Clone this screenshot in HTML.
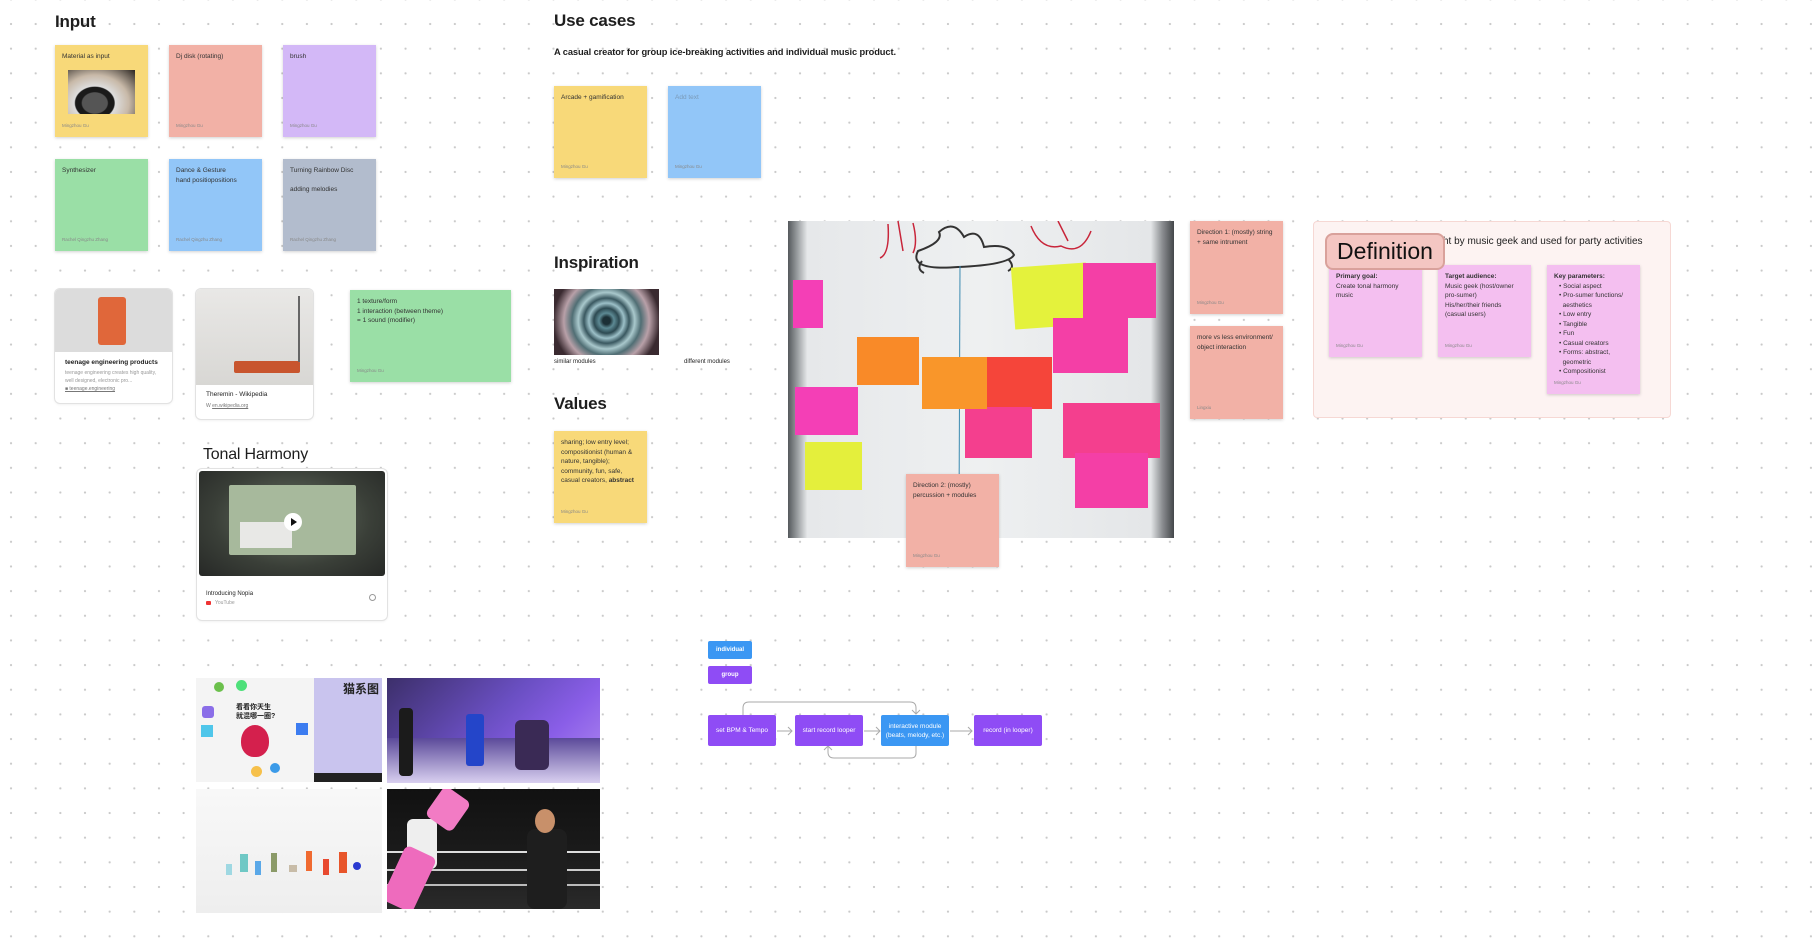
<!DOCTYPE html>
<html><head><meta charset="utf-8"><style>
*{margin:0;padding:0;box-sizing:border-box}
html,body{width:1812px;height:948px;overflow:hidden}
body{position:relative;background-color:#fff;background-image:radial-gradient(circle,#c9c9c9 0.9px,transparent 1.3px);background-size:24.66px 24.66px;background-position:-1.3px 11.7px;font-family:"Liberation Sans","Noto Sans CJK SC",sans-serif;color:#1e1e1e}
.a{position:absolute}
h1{position:absolute;font-size:17px;font-weight:bold;line-height:20px;letter-spacing:-0.2px}
.s{position:absolute;width:93px;height:92px;box-shadow:0 1px 3px rgba(0,0,0,.18);font-size:6.5px;line-height:9.5px;padding:7px 7px;color:#333}
.s .au{position:absolute;left:7px;bottom:7px;font-size:4.5px;color:#888}
.y{background:#f8d979}.r{background:#f2b1a6}.p{background:#d3b8f7}.g{background:#9adfa6}.b{background:#92c6f8}.gr{background:#b2bccd}.pk{background:#f4bff0}
.card{position:absolute;background:#fff;border-radius:5px;box-shadow:0 0 0 1px #e2e2e2,0 1px 3px rgba(0,0,0,.1);overflow:hidden}
.fl{position:absolute;height:31px;width:68px;color:#fff;font-size:6.5px;display:flex;align-items:center;justify-content:center;text-align:center;border-radius:2px;line-height:9px}
.pu{background:#8f4cf5}.bl{background:#3b97f3}
.wn{position:absolute}
</style></head><body>

<h1 style="left:55px;top:12px">Input</h1>
<div class="s y" style="left:55px;top:45px">Material as input
<div class="a" style="left:13px;top:25px;width:67px;height:44px;background:radial-gradient(ellipse at 40% 75%,#555 0 22%,#1a1a1a 24% 34%,#ddd 36%,#c8b9a8 60%,#2a2520 100%)"></div>
<div class="au">Mingzhou Gu</div></div>
<div class="s r" style="left:169px;top:45px">Dj disk (rotating)<div class="au">Mingzhou Gu</div></div>
<div class="s p" style="left:283px;top:45px">brush<div class="au">Mingzhou Gu</div></div>
<div class="s g" style="left:55px;top:159px">Synthesizer<div class="au">Rachel Qingzhu Zhang</div></div>
<div class="s b" style="left:169px;top:159px">Dance &amp; Gesture<br>hand positiopositions<div class="au">Rachel Qingzhu Zhang</div></div>
<div class="s gr" style="left:283px;top:159px">Turning Rainbow Disc<br><br>adding melodies<div class="au">Rachel Qingzhu Zhang</div></div>

<div class="card" style="left:55px;top:289px;width:117px;height:114px">
<div class="a" style="left:0;top:0;width:117px;height:63px;background:#dcdcdc"></div>
<div class="a" style="left:43px;top:8px;width:28px;height:48px;background:#e0673a;border-radius:3px"></div>
<div class="a" style="left:10px;top:70px;font-size:6.5px;font-weight:bold">teenage engineering products</div>
<div class="a" style="left:10px;top:80px;font-size:5px;line-height:8px;color:#999">teenage engineering creates high quality,<br>well designed, electronic pro...</div>
<div class="a" style="left:10px;top:97px;font-size:5px;color:#777;text-decoration:underline">&#9632; teenage.engineering</div>
</div>
<div class="card" style="left:196px;top:289px;width:117px;height:130px">
<div class="a" style="left:0;top:0;width:117px;height:96px;background:linear-gradient(#e9e8e6,#d8d7d4)"></div>
<div class="a" style="left:38px;top:72px;width:66px;height:12px;background:#c8552e;border-radius:2px"></div>
<div class="a" style="left:102px;top:7px;width:1.5px;height:66px;background:#666"></div>
<div class="a" style="left:10px;top:102px;font-size:6.5px">Theremin - Wikipedia</div>
<div class="a" style="left:10px;top:114px;font-size:5px;color:#777">W <u>en.wikipedia.org</u></div>
</div>
<div class="s g" style="left:350px;top:290px;width:161px;height:92px">1 texture/form<br>1 interaction (between theme)<br>= 1 sound (modifier)<div class="au">Mingzhou Gu</div></div>

<div class="a" style="left:203px;top:446px;font-size:16px;letter-spacing:-0.2px">Tonal Harmony</div>
<div class="card" style="left:197px;top:469px;width:190px;height:151px">
<div class="a" style="left:2px;top:2px;width:186px;height:105px;background:radial-gradient(ellipse at 50% 45%,#6b7566,#3a3f38 60%,#262826);border-radius:3px"></div>
<div class="a" style="left:32px;top:16px;width:127px;height:70px;background:#a7b99c;border-radius:2px"></div>
<div class="a" style="left:43px;top:53px;width:52px;height:26px;background:#e8e8e6"></div>
<div class="a" style="left:87px;top:44px;width:18px;height:18px;background:#fff;border-radius:50%"></div>
<div class="a" style="left:94px;top:49px;width:0;height:0;border-left:6px solid #111;border-top:4px solid transparent;border-bottom:4px solid transparent"></div>
<div class="a" style="left:9px;top:122px;font-size:6px">Introducing Nopia</div>
<div class="a" style="left:9px;top:132px;width:5px;height:4px;background:#e33;border-radius:1px"></div>
<div class="a" style="left:18px;top:131px;font-size:5px;color:#999">YouTube</div>
<div class="a" style="left:172px;top:125px;width:7px;height:7px;border:1px solid #999;border-radius:50%"></div>
</div>

<div class="a" style="left:196px;top:678px;width:186px;height:104px;background:#f4f4f4;overflow:hidden">
<div class="a" style="left:118px;top:0;width:68px;height:104px;background:#c9c4ee"></div>
<div class="a" style="left:147px;top:2px;font-size:12px;font-weight:bold;color:#222">猫系图</div>
<div class="a" style="left:40px;top:25px;font-size:7px;font-weight:bold;color:#222;line-height:9px">看看你天生<br>就混哪一圈?</div>
<div class="a" style="left:45px;top:47px;width:28px;height:32px;background:#d4204d;border-radius:50% 50% 45% 45%"></div>
<div class="a" style="left:18px;top:4px;width:10px;height:10px;background:#6bc04c;border-radius:50%"></div>
<div class="a" style="left:40px;top:2px;width:11px;height:11px;background:#4ee07a;border-radius:50%"></div>
<div class="a" style="left:6px;top:28px;width:12px;height:12px;background:#8b6ee8;border-radius:3px"></div>
<div class="a" style="left:5px;top:47px;width:12px;height:12px;background:#4fc6ea"></div>
<div class="a" style="left:100px;top:45px;width:12px;height:12px;background:#3c7cf0"></div>
<div class="a" style="left:74px;top:85px;width:10px;height:10px;background:#3b9ae8;border-radius:50%"></div>
<div class="a" style="left:55px;top:88px;width:11px;height:11px;background:#f6c04a;border-radius:50%"></div>
<div class="a" style="left:118px;top:95px;width:68px;height:9px;background:#222"></div>
</div>
<div class="a" style="left:387px;top:678px;width:213px;height:105px;background:linear-gradient(135deg,#3c2f6a,#6a4fc2 45%,#8a5ee8 70%,#b28cf0);overflow:hidden">
<div class="a" style="left:0;top:60px;width:213px;height:45px;background:linear-gradient(#5b4a9a,#d9d0f0)"></div>
<div class="a" style="left:12px;top:30px;width:14px;height:68px;background:#1b1b1b;border-radius:4px"></div>
<div class="a" style="left:79px;top:36px;width:18px;height:52px;background:#2445c9;border-radius:3px"></div>
<div class="a" style="left:128px;top:42px;width:34px;height:50px;background:#3a2a55;border-radius:6px"></div>
</div>
<div class="a" style="left:196px;top:789px;width:186px;height:124px;background:linear-gradient(#f8f8f8,#eeeeee)">
<div class="a" style="left:30px;top:75px;width:6px;height:11px;background:#9fd8e2"></div>
<div class="a" style="left:44px;top:65px;width:8px;height:18px;background:#6fc8c5"></div>
<div class="a" style="left:59px;top:72px;width:6px;height:14px;background:#5aa8e8"></div>
<div class="a" style="left:75px;top:64px;width:6px;height:19px;background:#8b9a68"></div>
<div class="a" style="left:93px;top:76px;width:8px;height:7px;background:#c8bca8"></div>
<div class="a" style="left:110px;top:62px;width:6px;height:20px;background:#f06a30"></div>
<div class="a" style="left:127px;top:70px;width:6px;height:16px;background:#e84a30"></div>
<div class="a" style="left:143px;top:63px;width:8px;height:21px;background:#e8552a"></div>
<div class="a" style="left:157px;top:73px;width:8px;height:8px;background:#2a3ad0;border-radius:50%"></div>
</div>
<div class="a" style="left:387px;top:789px;width:213px;height:120px;background:linear-gradient(#111 0,#1a1a1a 50%,#2a2a2a);overflow:hidden">
<div class="a" style="left:0;top:62px;width:213px;height:2px;background:#ddd"></div>
<div class="a" style="left:0;top:80px;width:213px;height:2px;background:#ccc"></div>
<div class="a" style="left:0;top:95px;width:213px;height:2px;background:#bbb"></div>
<div class="a" style="left:20px;top:30px;width:30px;height:50px;background:#eee;border-radius:6px"></div>
<div class="a" style="left:45px;top:2px;width:32px;height:36px;background:#f27bc4;transform:rotate(35deg);border-radius:6px"></div>
<div class="a" style="left:5px;top:60px;width:34px;height:60px;background:#ee6bbd;transform:rotate(25deg);border-radius:6px"></div>
<div class="a" style="left:140px;top:40px;width:40px;height:80px;background:#1e1e1e;border-radius:8px"></div>
<div class="a" style="left:148px;top:20px;width:20px;height:24px;background:#c8906a;border-radius:50%"></div>
</div>

<h1 style="left:554px;top:11px">Use cases</h1>
<div class="a" style="left:554px;top:47px;font-size:9.3px;font-weight:bold;letter-spacing:-0.1px">A casual creator for group ice-breaking activities and individual music product.</div>
<div class="s y" style="left:554px;top:86px">Arcade + gamification<div class="au">Mingzhou Gu</div></div>
<div class="s b" style="left:668px;top:86px;color:#7a9ab8">Add text<div class="au">Mingzhou Gu</div></div>

<h1 style="left:554px;top:253px">Inspiration</h1>
<div class="a" style="left:554px;top:289px;width:105px;height:66px;background:radial-gradient(circle at 50% 48%,#1c3036 0 6%,#5d8a94 12%,#2d4a52 20%,#9cc0c8 28%,#3a5860 36%,#a9c8cc 45%,#506e74 55%,#b8a0a8 68%,#3a2a30 85%)"></div>
<div class="a" style="left:554px;top:359px;font-size:6px">similar modules</div>
<div class="a" style="left:684px;top:359px;font-size:6px">different modules</div>

<h1 style="left:554px;top:394px">Values</h1>
<div class="s y" style="left:554px;top:431px">sharing; low entry level;<br>compositionist (human &amp;<br>nature, tangible);<br>community, fun, safe,<br>casual creators, <b>abstract</b><div class="au">Mingzhou Gu</div></div>

<!-- whiteboard -->
<div class="a" style="left:788px;top:221px;width:386px;height:317px;background:linear-gradient(90deg,#55595c 0,#8d9194 2%,#e6e8ea 5%,#eef0f1 50%,#e4e6e8 94%,#8a8d90 97%,#44474a);overflow:hidden">
<svg class="a" style="left:0;top:0" width="386" height="317" viewBox="0 0 386 317">
<path d="M100 3 q2 30 -8 34 M110 0 l5 30 M125 2 q5 20 0 30" stroke="#c8253a" stroke-width="1.5" fill="none"/>
<path d="M130 30 q-10 20 40 16 q50 -2 56 -12 q-6 -12 -30 -8 q-5 -20 -20 -10 q-10 -18 -25 -5 q5 10 -21 19 z M134 40 q-6 8 2 12 M220 38 q8 8 0 12" stroke="#333" stroke-width="2" fill="none"/>
<path d="M243 5 q10 25 30 20 q20 10 30 -15 M270 0 l10 20" stroke="#c8253a" stroke-width="1.5" fill="none"/>
<path d="M172 45 L171 300" stroke="#3a8ab0" stroke-width="1"/>
</svg>
<div class="wn" style="left:5px;top:59px;width:30px;height:48px;background:#f43fb6"></div>
<div class="wn" style="left:69px;top:116px;width:62px;height:48px;background:#f98a28"></div>
<div class="wn" style="left:7px;top:166px;width:63px;height:48px;background:#f43fb6"></div>
<div class="wn" style="left:17px;top:221px;width:57px;height:48px;background:#e4ef3c"></div>
<div class="wn" style="left:197px;top:136px;width:67px;height:52px;background:#f5453a"></div>
<div class="wn" style="left:177px;top:186px;width:67px;height:51px;background:#f43f8e"></div>
<div class="wn" style="left:134px;top:136px;width:65px;height:52px;background:#f9962a"></div>
<div class="wn" style="left:225px;top:44px;width:75px;height:62px;background:#e4f23c;transform:rotate(-4deg)"></div>
<div class="wn" style="left:295px;top:42px;width:73px;height:55px;background:#f43fa6"></div>
<div class="wn" style="left:265px;top:97px;width:75px;height:55px;background:#f43fa6"></div>
<div class="wn" style="left:275px;top:182px;width:97px;height:55px;background:#f43f8e"></div>
<div class="wn" style="left:287px;top:232px;width:73px;height:55px;background:#f43fa6"></div>
</div>
<div class="s r" style="left:906px;top:474px;height:93px">Direction 2: (mostly)<br>percussion + modules<div class="au">Mingzhou Gu</div></div>

<div class="s r" style="left:1190px;top:221px;height:93px">Direction 1: (mostly) string<br>+ same intrument<div class="au">Mingzhou Gu</div></div>
<div class="s r" style="left:1190px;top:326px;height:93px">more vs less environment/<br>object interaction<div class="au">Lingxiu</div></div>

<div class="a" style="left:1313px;top:221px;width:358px;height:197px;background:#fdf3f2;border:1px solid #f6d8d4;border-radius:4px"></div>
<div class="a" style="left:1443px;top:236px;font-size:10px">ht by music geek and used for party activities</div>
<div class="s pk" style="left:1329px;top:265px"><b>Primary goal:</b><br>Create tonal harmony<br>music<div class="au">Mingzhou Gu</div></div>
<div class="s pk" style="left:1438px;top:265px"><b>Target audience:</b><br>Music geek (host/owner<br>pro-sumer)<br>His/her/their friends<br>(casual users)<div class="au">Mingzhou Gu</div></div>
<div class="s pk" style="left:1547px;top:265px;height:129px"><b>Key parameters:</b><div style="padding-left:5px">• Social aspect<br>• Pro-sumer functions/<br>&nbsp;&nbsp;aesthetics<br>• Low entry<br>• Tangible<br>• Fun<br>• Casual creators<br>• Forms: abstract,<br>&nbsp;&nbsp;geometric<br>• Compositionist</div><div class="au">Mingzhou Gu</div></div>
<div class="a" style="left:1325px;top:233px;width:120px;height:37px;background:#f4c6c2;border:2px solid #d9a19b;border-radius:8px;font-size:23px;line-height:33px;text-align:center;color:#111">Definition</div>

<!-- flow -->
<div class="fl bl" style="left:708px;top:641px;width:44px;height:18px;font-weight:bold;font-size:6px">individual</div>
<div class="fl pu" style="left:708px;top:666px;width:44px;height:18px;font-weight:bold;font-size:6px">group</div>
<svg class="a" style="left:700px;top:695px" width="360" height="70" viewBox="0 0 360 70">
<g stroke="#aaa" stroke-width="1" fill="none">
<path d="M43 20 V13 q0 -6 6 -6 H210 q6 0 6 6 V19 M212 15 l4 4 l4 -4"/>
<path d="M216 51 V58 q0 5 -5 5 H134 q-6 0 -6 -6 V52 M124 55 l4 -4 l4 4"/>
<path d="M77 36 H92 M88 32 l4 4 l-4 4"/>
<path d="M164 36 H180 M176 32 l4 4 l-4 4"/>
<path d="M250 36 H272 M268 32 l4 4 l-4 4"/>
</g></svg>
<div class="fl pu" style="left:708px;top:715px">set BPM &amp; Tempo</div>
<div class="fl pu" style="left:795px;top:715px">start record looper</div>
<div class="fl bl" style="left:881px;top:715px">interactive module<br>(beats, melody, etc.)</div>
<div class="fl pu" style="left:974px;top:715px">record (in looper)</div>
</body></html>
